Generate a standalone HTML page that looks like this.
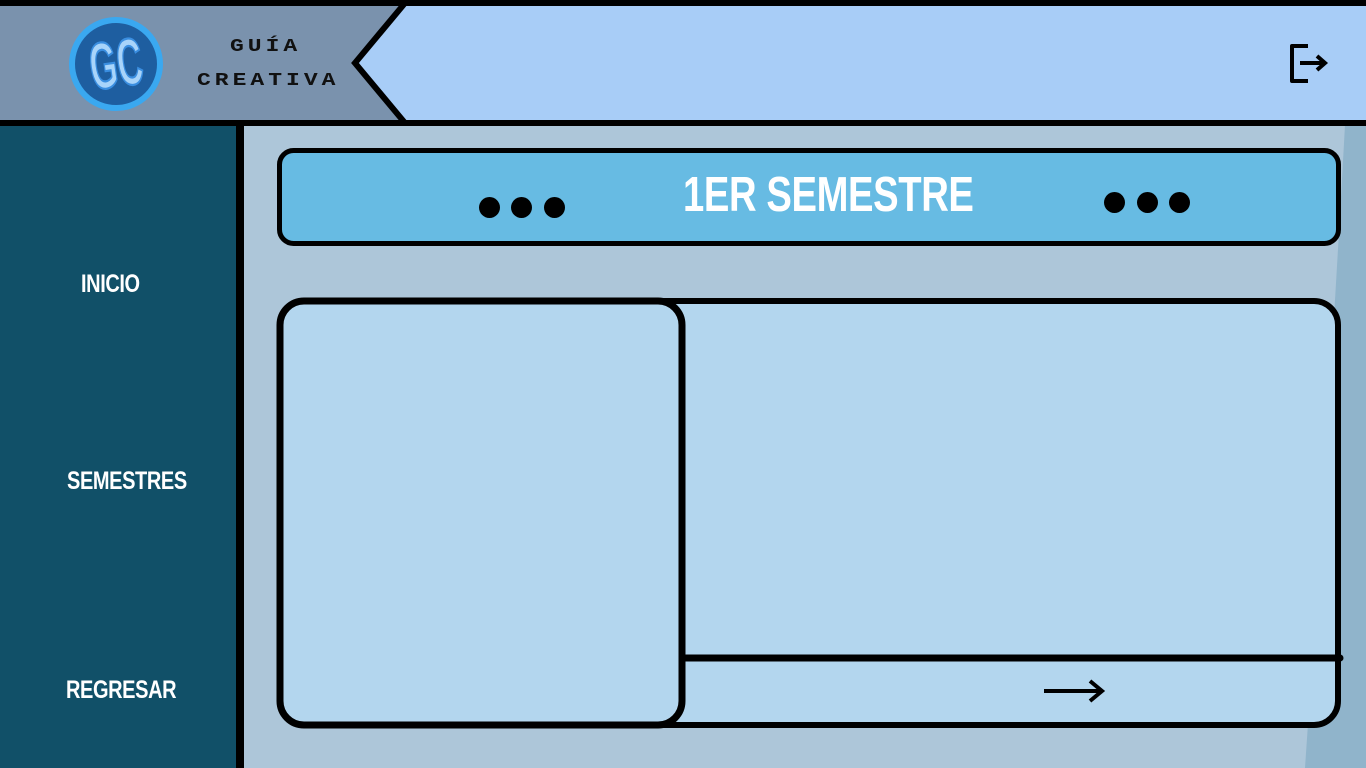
<!DOCTYPE html>
<html><head><meta charset="utf-8"><style>
*{margin:0;padding:0;box-sizing:border-box}
body{width:1366px;height:768px;overflow:hidden;position:relative;background:#adc6d9;font-family:"Liberation Sans",sans-serif}
.abs{position:absolute}
.nav{color:#fff;font-weight:bold;font-size:25px;letter-spacing:-0.5px;transform:scaleX(0.8);transform-origin:left}
.dot{position:absolute;width:21px;height:21px;border-radius:50%;background:#000}
.hd{position:absolute;font:bold 23px 'Liberation Mono',monospace;color:#111;letter-spacing:4px;transform:scaleY(0.8)}
</style></head><body>
<svg class="abs" style="left:0;top:0" width="1366" height="768">
<path d="M1345 125 Q1330 400 1305 768 L1366 768 L1366 125Z" fill="#90b4cb"/>
<rect x="0" y="0" width="1366" height="126" fill="#a8cdf7"/>
<polygon points="0,0 405,0 355,63 405,126 0,126" fill="#7a92ad"/>
<rect x="0" y="0" width="1366" height="6" fill="#000"/>
<rect x="0" y="120" width="1366" height="6" fill="#000"/>
<polyline points="405,3 355,63 405,123" fill="none" stroke="#000" stroke-width="6"/>
<rect x="0" y="126" width="236" height="642" fill="#115068"/>
<rect x="236" y="126" width="8" height="642" fill="#000"/>
<circle cx="116" cy="64" r="44" fill="#1e5ea0" stroke="#3aa8f0" stroke-width="6"/>
<g transform="translate(116 64) rotate(-8) scale(0.8 1.5)">
<text x="0" y="15" text-anchor="middle" font-family="Liberation Sans" font-weight="bold" font-size="44" fill="#a8d4fa" stroke="#3a8ee0" stroke-width="1.5">GC</text></g>
<path d="M1308 46 H1292 V81 H1308" fill="none" stroke="#000" stroke-width="4" stroke-linejoin="round"/>
<path d="M1300 63 H1324 M1317 56 L1325 63 L1317 70" fill="none" stroke="#000" stroke-width="4"/>
<rect x="279.5" y="150.5" width="1059" height="93" rx="14" fill="#67bbe3" stroke="#000" stroke-width="5"/>
<rect x="280" y="301" width="1058" height="424" rx="24" fill="#b3d6ee" stroke="#000" stroke-width="6"/>
<line x1="682" y1="658" x2="1340" y2="658" stroke="#000" stroke-width="7" stroke-linecap="round"/>
<rect x="280" y="301" width="402" height="424" rx="24" fill="#b3d6ee" stroke="#000" stroke-width="7"/>
<path d="M1044 691 H1100 M1090 681 L1102 691 L1090 701" fill="none" stroke="#000" stroke-width="4"/>
</svg>
<div class="hd" style="left:230px;top:33px">GUÍA</div>
<div class="hd" style="left:197px;top:67px">CREATIVA</div>
<div class="dot" style="left:479px;top:197px"></div><div class="dot" style="left:511px;top:197px"></div><div class="dot" style="left:544px;top:197px"></div>
<div class="dot" style="left:1104px;top:192px"></div><div class="dot" style="left:1137px;top:192px"></div><div class="dot" style="left:1169px;top:192px"></div>
<div class="abs nav" style="left:683px;top:167px;font-size:49px;transform:scaleX(0.78)">1ER SEMESTRE</div>
<div class="abs nav" style="left:81px;top:270px">INICIO</div>
<div class="abs nav" style="left:67px;top:467px">SEMESTRES</div>
<div class="abs nav" style="left:66px;top:676px">REGRESAR</div>
</body></html>
